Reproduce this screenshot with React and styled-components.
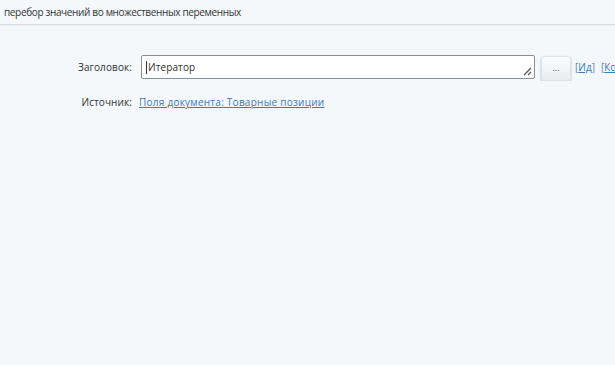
import React from 'react'
import styled, { createGlobalStyle } from 'styled-components'

const Global = createGlobalStyle`
  html, body {
    margin: 0;
    padding: 0;
    background: #f4f8fa;
    font-family: "Open Sans", "Noto Sans", sans-serif;
    overflow: hidden;
  }
`

const Page = styled.div`
  width: 615px;
  height: 365px;
  background: #f4f8fa;
  overflow: hidden;
  font-size: 10px;
`

const Header = styled.div`
  height: 25px;
  border-bottom: 1px solid #d6dde3;
  box-shadow: 0 1px 0 #e8edf1;
  padding-left: 4px;
  display: flex;
  align-items: center;
  color: #333;
  white-space: nowrap;
  box-sizing: border-box;
  letter-spacing: -0.35px;
`

const Form = styled.div`
  display: grid;
  grid-template-columns: 132px auto;
  column-gap: 9px;
  row-gap: 14px;
  padding-top: 28px;
  align-items: center;
`

const Label = styled.div`
  text-align: right;
  color: #333;
  white-space: nowrap;
  letter-spacing: 0.1px;
`

const Row = styled.div`
  display: flex;
  align-items: center;
  white-space: nowrap;
  overflow: ${p => (p.$clip ? 'hidden' : 'visible')};
`

const InputBox = styled.div`
  position: relative;
  flex: none;
  width: 394px;
  height: 24px;
  box-sizing: border-box;
  border: 1px solid #8a8f94;
  border-radius: 2px;
  background: #fff;
  display: flex;
  align-items: center;
  padding-left: 4px;
  color: #333;
  letter-spacing: 0.1px;
`

const Caret = styled.span`
  width: 1px;
  height: 13px;
  background: #333;
  margin-right: 1px;
`

const Grip = styled.svg`
  position: absolute;
  right: 2px;
  bottom: 2px;
`

const DotsButton = styled.div`
  flex: none;
  width: 30px;
  height: 25px;
  margin-left: 6px;
  margin-top: 3px;
  border-radius: 4px;
  border: 1px solid #dde2e6;
  background: linear-gradient(#fdfdfe, #e8ecef);
  box-shadow: 0 1px 2px rgba(0, 0, 0, 0.3);
  display: flex;
  align-items: center;
  justify-content: center;
  font-size: 9px;
  color: #444;
  padding-bottom: 2px;
  box-sizing: border-box;
`

const Bracket = styled.span`
  margin-left: ${p => p.gap}px;
  color: #5a8ab8;
  a {
    color: #3a7abf;
    text-decoration: underline;
  }
`

const Link = styled.a`
  margin-left: -2px;
  color: #3a7abf;
  text-decoration: underline;
  letter-spacing: 0.25px;
`

export default function App() {
  return (
    <Page>
      <Global />
      <Header>перебор значений во множественных переменных</Header>
      <Form>
        <Label>Заголовок:</Label>
        <Row $clip>
          <InputBox>
            <Caret />
            Итератор
            <Grip width="10" height="10" viewBox="0 0 10 10">
              <path d="M2 9 L9 2 M6 9 L9 6" stroke="#555" strokeWidth="1.2" />
            </Grip>
          </InputBox>
          <DotsButton>...</DotsButton>
          <Bracket gap={4}>[<a>Ид</a>]</Bracket>
          <Bracket gap={6}>[<a>Ко</a></Bracket>
        </Row>
        <Label>Источник:</Label>
        <Row>
          <Link>Поля документа: Товарные позиции</Link>
        </Row>
      </Form>
    </Page>
  )
}
